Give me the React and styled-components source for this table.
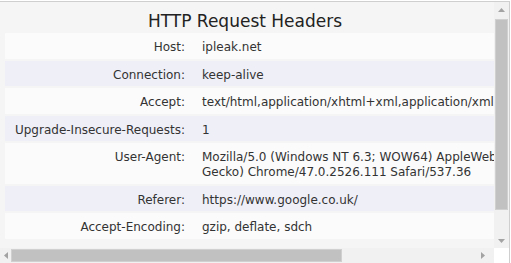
import React from "react";
import styled, { createGlobalStyle } from "styled-components";

const Global = createGlobalStyle`
  html, body { margin: 0; padding: 0; background: #ffffff; }
  body { font-family: "DejaVu Sans", Verdana, sans-serif; }
`;

const Frame = styled.div`
  margin-top: 1px;
  width: 509px;
  height: 262px;
  border-top: 1px solid #cfcfcf;
  border-right: 1px solid #cfcfcf;
  background: #f5f5f5;
  display: grid;
  grid-template-columns: 494px 15px;
  grid-template-rows: 246px 15px;
  overflow: hidden;
`;

const Viewport = styled.div`
  overflow: hidden;
  min-width: 0;
`;

const Title = styled.h2`
  margin: 0;
  padding: 9px 4px 0 0;
  width: 494px;
  box-sizing: border-box;
  height: 29px;
  line-height: 20px;
  font-size: 17px;
  font-weight: normal;
  text-align: center;
  color: #222222;
`;

const Table = styled.table`
  width: max-content;
  margin-left: 5px;
  border-collapse: separate;
  border-spacing: 0 2px;
  font-size: 12px;
  line-height: 15px;
  color: #333333;
`;

const Row = styled.tr`
  background: ${(p) => (p.$alt ? "#efeff8" : "#fbfbfb")};
`;

const Label = styled.td`
  width: 180px;
  min-width: 180px;
  box-sizing: content-box;
  padding: 7px 8px 3.5px 0;
  text-align: right;
  white-space: nowrap;
  vertical-align: top;
`;

const Value = styled.td`
  padding: 7px 20px 3.5px 9px;
  white-space: nowrap;
  vertical-align: top;
`;

const VBar = styled.div`
  background: #f1f1f1;
  display: flex;
  flex-direction: column;
`;

const HBar = styled.div`
  background: #f1f1f1;
  display: flex;
  align-items: center;
`;

const Corner = styled.div`
  background: #ffffff;
`;

const ArrowBtn = styled.div`
  flex: none;
  width: ${(p) => p.$w || "15px"};
  height: 15px;
  display: flex;
  align-items: center;
  justify-content: center;
`;

const VTrack = styled.div`
  flex: 1;
  padding: 2px 1px 0 1px;
  display: flex;
  flex-direction: column;
`;

const VThumb = styled.div`
  height: 191px;
  background: #c1c1c1;
  border: 1px solid #d0d0d0;
  box-sizing: border-box;
`;

const HTrack = styled.div`
  flex: 1;
  height: 15px;
  padding: 1px 0;
  box-sizing: border-box;
  display: flex;
`;

const HThumb = styled.div`
  width: 331px;
  background: #c1c1c1;
  border: 1px solid #d0d0d0;
  box-sizing: border-box;
`;

const Arrow = ({ dir }) => {
  const pts = {
    up: "0,4 7,4 3.5,0",
    down: "0,0 7,0 3.5,4",
    left: "4,0 4,7 0,3.5",
    right: "0,0 0,7 4,3.5",
  }[dir];
  const horiz = dir === "left" || dir === "right";
  return (
    <svg width={horiz ? 4 : 7} height={horiz ? 7 : 4} viewBox={horiz ? "0 0 4 7" : "0 0 7 4"}>
      <polygon points={pts} fill="#a3a3a3" />
    </svg>
  );
};

const rows = [
  ["Host:", ["ipleak.net"]],
  ["Connection:", ["keep-alive"]],
  ["Accept:", ["text/html,application/xhtml+xml,application/xml;q=0.9,image/webp,*/*;q=0.8"]],
  ["Upgrade-Insecure-Requests:", ["1"]],
  [
    "User-Agent:",
    [
      "Mozilla/5.0 (Windows NT 6.3; WOW64) AppleWebKit/537.36 (KHTML, like",
      "Gecko) Chrome/47.0.2526.111 Safari/537.36",
    ],
  ],
  ["Referer:", ["https://www.google.co.uk/"]],
  ["Accept-Encoding:", ["gzip, deflate, sdch"]],
];

export default function App() {
  return (
    <>
      <Global />
      <Frame>
        <Viewport>
          <Title>HTTP Request Headers</Title>
          <Table>
            <tbody>
              {rows.map(([k, v], i) => (
                <Row key={k} $alt={i % 2 === 1}>
                  <Label>{k}</Label>
                  <Value>
                    {v.map((line, j) => (
                      <React.Fragment key={j}>
                        {j > 0 && <br />}
                        {line}
                      </React.Fragment>
                    ))}
                  </Value>
                </Row>
              ))}
            </tbody>
          </Table>
        </Viewport>
        <VBar>
          <ArrowBtn>
            <Arrow dir="up" />
          </ArrowBtn>
          <VTrack>
            <VThumb />
          </VTrack>
          <ArrowBtn>
            <Arrow dir="down" />
          </ArrowBtn>
        </VBar>
        <HBar>
          <ArrowBtn $w="11px">
            <Arrow dir="left" />
          </ArrowBtn>
          <HTrack>
            <HThumb />
          </HTrack>
          <ArrowBtn $w="22px">
            <Arrow dir="right" />
          </ArrowBtn>
        </HBar>
        <Corner />
      </Frame>
    </>
  );
}
